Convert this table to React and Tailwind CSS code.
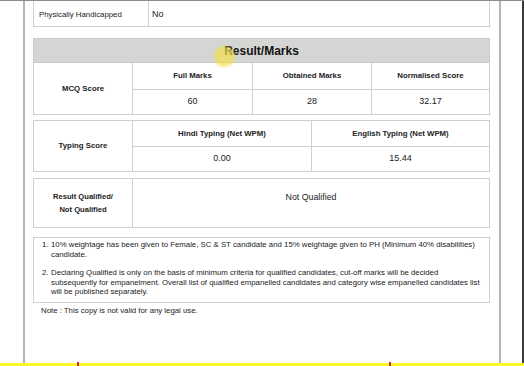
export default function App() {
  return (
    <div className="relative w-[524px] h-[366px] overflow-hidden bg-white font-['Liberation_Sans',Arial,sans-serif] text-[#222]">
      {/* screen top edge */}
      <div className="h-[1px] bg-[#8c8c8c]" />

      <div className="flex h-[362px]">
        <div className="w-[23px] shrink-0" />

        {/* Printed page */}
        <div className="w-[478px] shrink-0 border-x-2 border-[#b5b5b5] pl-[8px] pr-[9px]">
          {/* Previous details row */}
          <div className="grid h-[26px] grid-cols-[114px_1fr] border-x border-b border-[#cfcfcf]">
            <div className="flex items-center pl-[5px] pt-[2px] text-[7.8px]">Physically Handicapped</div>
            <div className="flex items-center border-l border-[#cfcfcf] pl-[3px] pt-[3px] text-[9px]">No</div>
          </div>

          {/* Result / Marks heading */}
          <div className="mt-[11px] flex h-[25px] items-center justify-center border border-[#cacaca] bg-[#d5d6d4] text-[12px] font-bold text-[#111]">
            Result/Marks
          </div>

          {/* MCQ Score */}
          <div className="grid grid-cols-[98px_120px_119px_1fr] grid-rows-[26px_25px] border-x border-b border-[#cfcfcf]">
            <div className="row-span-2 flex items-center justify-center text-[7.8px] font-bold">MCQ Score</div>
            <div className="flex items-center justify-center border-l border-[#cfcfcf] text-[7.8px] font-bold">Full Marks</div>
            <div className="flex items-center justify-center border-l border-[#cfcfcf] text-[7.8px] font-bold">Obtained Marks</div>
            <div className="flex items-center justify-center border-l border-[#cfcfcf] text-[7.8px] font-bold">Normalised Score</div>
            <div className="flex items-center justify-center border-l border-t border-[#cfcfcf] text-[9px]">60</div>
            <div className="flex items-center justify-center border-l border-t border-[#cfcfcf] text-[9px]">28</div>
            <div className="flex items-center justify-center border-l border-t border-[#cfcfcf] text-[9px]">32.17</div>
          </div>

          {/* Typing Score */}
          <div className="mt-[5px] grid grid-cols-[98px_179px_1fr] grid-rows-[25px_25px] border border-[#cfcfcf]">
            <div className="row-span-2 flex items-center justify-center text-[7.8px] font-bold">Typing Score</div>
            <div className="flex items-center justify-center border-l border-[#cfcfcf] text-[7.8px] font-bold">Hindi Typing (Net WPM)</div>
            <div className="flex items-center justify-center border-l border-[#cfcfcf] text-[7.8px] font-bold">English Typing (Net WPM)</div>
            <div className="flex items-center justify-center border-l border-t border-[#cfcfcf] text-[9px]">0.00</div>
            <div className="flex items-center justify-center border-l border-t border-[#cfcfcf] text-[9px]">15.44</div>
          </div>

          {/* Result */}
          <div className="mt-[6px] grid h-[50px] grid-cols-[98px_1fr] border border-[#cfcfcf]">
            <div className="flex flex-col items-center justify-center text-[7.6px] font-bold leading-[13px]">
              <span>Result Qualified/</span>
              <span>Not Qualified</span>
            </div>
            <div className="border-l border-[#cfcfcf] pt-[12px] text-center text-[8.8px]">Not Qualified</div>
          </div>

          {/* Notes */}
          <div className="mt-[9px] border border-[#cfcfcf] pb-[5px] pl-[8px] pr-[4px] pt-[2px] text-[7.8px] leading-[9.5px]">
            <div className="flex">
              <span className="w-[9px] shrink-0">1.</span>
              <p>
                10% weightage has been given to Female, SC &amp; ST candidate and 15% weightage given to PH (Minimum 40% disabilities)
                <br />
                candidate.
              </p>
            </div>
            <div className="mt-[9px] flex">
              <span className="w-[9px] shrink-0">2.</span>
              <p>
                Declaring Qualified is only on the basis of minimum criteria for qualified candidates, cut-off marks will be decided
                <br />
                subsequently for empanelment. Overall list of qualified empanelled candidates and category wise empanelled candidates list
                <br />
                will be published separately.
              </p>
            </div>
          </div>

          <p className="mt-[3px] pl-[8px] text-[7.8px] leading-[9.5px]">Note : This copy is not valid for any legal use.</p>
        </div>

        <div className="flex-1" />
        <div className="w-[2px] shrink-0 bg-[#3a3a3a]" />
      </div>

      {/* bottom taskbar strip */}
      <div className="h-[3px] bg-[#f8f82c]" />

      {/* overlays: cursor highlight and red marks */}
      <div className="absolute left-[214px] top-[46px] h-[21px] w-[21px] rounded-full bg-[#f1e04a]/70 blur-[1.5px]" />
      <div className="absolute left-[77px] top-[362px] h-[4px] w-[2px] bg-[#e02424]" />
      <div className="absolute left-[389px] top-[362px] h-[4px] w-[2px] bg-[#e02424]" />
    </div>
  );
}
